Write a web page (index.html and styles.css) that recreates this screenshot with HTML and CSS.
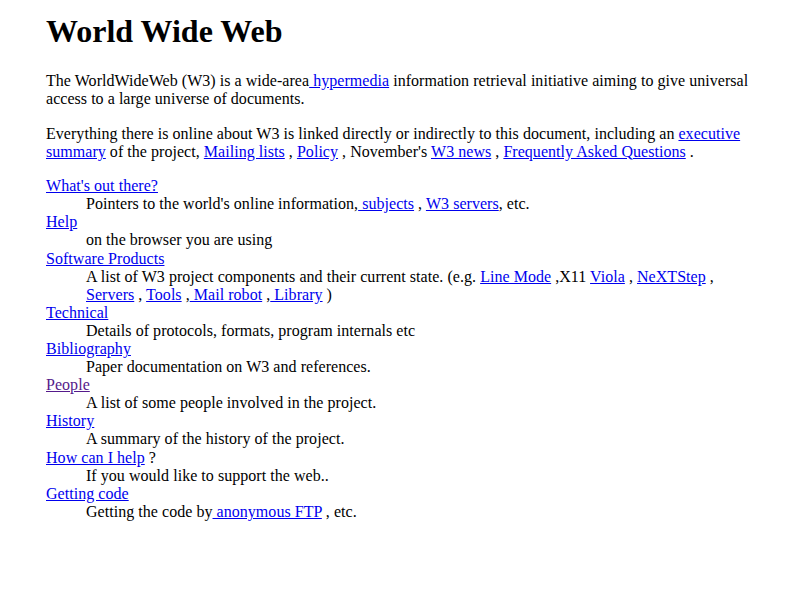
FILE: index.html
```html
<!DOCTYPE html>
<html>
<head>
<meta charset="utf-8">
<title>The World Wide Web project</title>
<link rel="stylesheet" href="styles.css">
</head>
<body>
<div class="page">
<h1 class="title">World Wide Web</h1>
<p class="para">The WorldWideWeb (W3) is a wide-area<a class="link" href="#"> hypermedia</a> information retrieval initiative aiming to give universal access to a large universe of documents.</p>
<p class="para">Everything there is online about W3 is linked directly or indirectly to this document, including an <a class="link" href="#">executive summary</a> of the project, <a class="link" href="#">Mailing lists</a> , <a class="link" href="#">Policy</a> , November's <a class="link" href="#">W3 news</a> , <a class="link" href="#">Frequently Asked Questions</a> .</p>
<dl class="list">
<dt class="term"><a class="link" href="#">What's out there?</a></dt>
<dd class="desc">Pointers to the world's online information,<a class="link" href="#"> subjects</a> , <a class="link" href="#">W3 servers</a>, etc.</dd>
<dt class="term"><a class="link" href="#">Help</a></dt>
<dd class="desc">on the browser you are using</dd>
<dt class="term"><a class="link" href="#">Software Products</a></dt>
<dd class="desc">A list of W3 project components and their current state. (e.g. <a class="link" href="#">Line Mode</a> ,X11 <a class="link" href="#">Viola</a> , <a class="link" href="#">NeXTStep</a> , <a class="link" href="#">Servers</a> , <a class="link" href="#">Tools</a> ,<a class="link" href="#"> Mail robot</a> ,<a class="link" href="#"> Library</a> )</dd>
<dt class="term"><a class="link" href="#">Technical</a></dt>
<dd class="desc">Details of protocols, formats, program internals etc</dd>
<dt class="term"><a class="link" href="#">Bibliography</a></dt>
<dd class="desc">Paper documentation on W3 and references.</dd>
<dt class="term"><a class="link visited" href="#">People</a></dt>
<dd class="desc">A list of some people involved in the project.</dd>
<dt class="term"><a class="link" href="#">History</a></dt>
<dd class="desc">A summary of the history of the project.</dd>
<dt class="term"><a class="link" href="#">How can I help</a> ?</dt>
<dd class="desc">If you would like to support the web..</dd>
<dt class="term"><a class="link" href="#">Getting code</a></dt>
<dd class="desc">Getting the code by<a class="link" href="#"> anonymous FTP</a> , etc.</dd>
</dl>
</div>
</body>
</html>
```

FILE: styles.css
```css
html, body {
  margin: 0;
  padding: 0;
  background: #ffffff;
}
body {
  font-family: "Liberation Serif", "Times New Roman", serif;
  font-size: 16px;
  line-height: 18.1px;
  letter-spacing: 0.04px;
  color: #000000;
}
.page {
  padding: 13px 46px 0 46px;
}
.title {
  font-size: 32px;
  line-height: 37px;
  font-weight: bold;
  letter-spacing: 0;
  margin: 0 0 22px 0;
}
.para {
  margin: 0 0 16.4px 0;
}
.list {
  margin: 0;
}
.term {
  margin: 0;
}
.desc {
  margin: 0 0 0 40px;
}
.link {
  color: #0000ee;
  text-decoration: underline;
}
.link.visited {
  color: #551a8b;
}
```
